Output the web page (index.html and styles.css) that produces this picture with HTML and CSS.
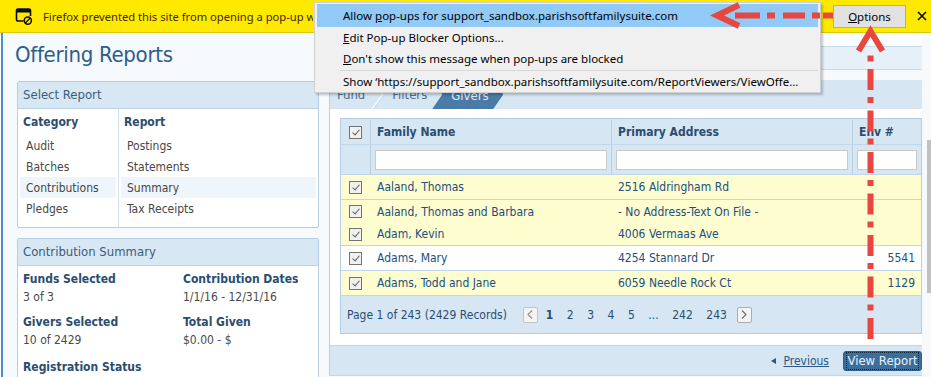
FILE: index.html
```html
<!DOCTYPE html>
<html>
<head>
	<meta charset="utf-8">
	<meta name="viewport" content="width=device-width">
	<title>Offering Reports</title>
	<link rel="stylesheet" href="styles.css">
</head>
<body>
	<div class="notify">
		<svg class="notify-icon" width="18" height="18" viewBox="0 0 18 18">
			<path d="M8.5 14H3a1.5 1.5 0 0 1-1.5-1.5V3.5A1.5 1.5 0 0 1 3 2h11a1.5 1.5 0 0 1 1.5 1.5V9" fill="none" stroke="#0c0c0d" stroke-width="1.6"/>
			<path d="M1.5 3.5A1.5 1.5 0 0 1 3 2h11a1.5 1.5 0 0 1 1.5 1.5V5.5H1.5z" fill="#0c0c0d"/>
			<circle cx="12.8" cy="13.6" r="3.6" fill="none" stroke="#0c0c0d" stroke-width="1.5"/>
			<path d="M10.3 16.1L15.3 11.1" stroke="#0c0c0d" stroke-width="1.4"/>
		</svg>
		<span class="notify-text">Firefox prevented this site from opening a pop-up window.</span>
		<button class="options" type="button"><u>O</u>ptions</button>
		<svg class="close" width="10" height="10" viewBox="0 0 10 10">
			<path d="M1 1L9 9M9 1L1 9" stroke="#0c0c0d" stroke-width="1.6"/>
		</svg>
	</div>

	<div class="page">
		<div class="left">
			<h1>Offering Reports</h1>

			<div class="panel">
				<div class="panel-head">Select Report</div>
				<div class="picker">
					<div class="pick-col cat">
						<div class="pick-head">Category</div>
						<div class="pick-item">Audit</div>
						<div class="pick-item">Batches</div>
						<div class="pick-item active">Contributions</div>
						<div class="pick-item">Pledges</div>
					</div>
					<div class="pick-col">
						<div class="pick-head">Report</div>
						<div class="pick-item">Postings</div>
						<div class="pick-item">Statements</div>
						<div class="pick-item active">Summary</div>
						<div class="pick-item">Tax Receipts</div>
					</div>
				</div>
			</div>

			<div class="panel summary">
				<div class="panel-head">Contribution Summary</div>
				<div class="summary-body">
					<div class="stat"><b>Funds Selected</b><span>3 of 3</span></div>
					<div class="stat"><b>Contribution Dates</b><span>1/1/16 - 12/31/16</span></div>
					<div class="stat"><b>Givers Selected</b><span>10 of 2429</span></div>
					<div class="stat"><b>Total Given</b><span>$0.00 - $</span></div>
					<div class="stat last"><b>Registration Status</b></div>
				</div>
			</div>
		</div>

		<div class="right">
			<div class="toolbar"></div>
			<div class="subbar"></div>
			<div class="wizard">
				<div class="crumbs">
					<span class="crumb">Fund</span>
					<svg class="crumb-sep" width="14" height="29" viewBox="0 0 14 29">
						<path d="M1 0L12 14.5L1 29" fill="none" stroke="#f5f9fc" stroke-width="1.6"/>
						<path d="M2.4 0L13.4 14.5L2.4 29" fill="none" stroke="#c3d5e5" stroke-width="0.8"/>
					</svg>
					<span class="crumb">Filters</span>
					<span class="crumb current">Givers</span>
				</div>

				<div class="wizard-body">
					<div class="grid">
						<div class="grid-row grid-head">
							<div class="cell cell-check"><span class="cb"></span></div>
							<div class="cell">Family Name</div>
							<div class="cell">Primary Address</div>
							<div class="cell">Env #</div>
						</div>
						<div class="grid-row grid-filter">
							<div class="cell"></div>
							<div class="cell"><input type="text"></div>
							<div class="cell"><input type="text"></div>
							<div class="cell"><input type="text"></div>
						</div>
						<div class="grid-row row">
							<div class="cell cell-check"><span class="cb"></span></div>
							<div class="cell">Aaland, Thomas</div>
							<div class="cell">2516 Aldringham Rd</div>
							<div class="cell num"></div>
						</div>
						<div class="grid-row row tight">
							<div class="cell cell-check"><span class="cb"></span></div>
							<div class="cell">Aaland, Thomas and Barbara</div>
							<div class="cell">- No Address-Text On File -</div>
							<div class="cell num"></div>
						</div>
						<div class="grid-row row short">
							<div class="cell cell-check"><span class="cb"></span></div>
							<div class="cell">Adam, Kevin</div>
							<div class="cell">4006 Vermaas Ave</div>
							<div class="cell num"></div>
						</div>
						<div class="grid-row row plain">
							<div class="cell cell-check"><span class="cb"></span></div>
							<div class="cell">Adams, Mary</div>
							<div class="cell">4254 Stannard Dr</div>
							<div class="cell num">5541</div>
						</div>
						<div class="grid-row row">
							<div class="cell cell-check"><span class="cb"></span></div>
							<div class="cell">Adams, Todd and Jane</div>
							<div class="cell">6059 Needle Rock Ct</div>
							<div class="cell num">1129</div>
						</div>
						<div class="pager">
							<span class="pg-info">Page 1 of 243 (2429 Records)</span>
							<span class="pg-btn prev-btn">
								<svg width="6" height="9" viewBox="0 0 6 9"><path d="M5 0.5L1 4.5L5 8.5" fill="none" stroke="#8c8c8c" stroke-width="1.1"/></svg>
							</span>
							<span class="pg-list">
								<b>1</b><span>2</span><span>3</span><span>4</span><span>5</span><span>...</span><span>242</span><span>243</span>
							</span>
							<span class="pg-btn next-btn">
								<svg width="6" height="9" viewBox="0 0 6 9"><path d="M1 0.5L5 4.5L1 8.5" fill="none" stroke="#6c6c6c" stroke-width="1.1"/></svg>
							</span>
						</div>
					</div>
				</div>

				<div class="wizard-foot">
					<a class="prev" href="#"><span class="tri"></span><span class="prev-text">Previous</span></a>
					<button class="view-btn" type="button"><span>View Report</span></button>
				</div>
			</div>
		</div>

		<div class="scrollbar"><div class="thumb"></div></div>
	</div>

	<div class="popup">
		<div class="popup-item hot">Allow <u>p</u>op-ups for support_sandbox.parishsoftfamilysuite.com</div>
		<div class="popup-item"><u>E</u>dit Pop-up Blocker Options...</div>
		<div class="popup-item"><u>D</u>on't show this message when pop-ups are blocked</div>
		<div class="popup-sep"></div>
		<div class="popup-item">Show ‘https://support_sandbox.parishsoftfamilysuite.com/ReportViewers/ViewOffe...</div>
	</div>

	<!-- red arrows drawn over the screenshot -->
	<svg class="annot" width="931" height="377" viewBox="0 0 931 377">
		<g fill="#e8463f">
			<rect x="735" y="12.5" width="25" height="6"/>
			<rect x="767" y="12.5" width="8" height="6"/>
			<rect x="783" y="12.5" width="22" height="6"/>
			<rect x="812" y="12.5" width="8" height="6"/>
			<rect x="823" y="12.5" width="10" height="6"/>
		</g>
		<polyline points="739,5 717,15.5 739,26" fill="none" stroke="#e8463f" stroke-width="6"/>
		<line x1="870.5" y1="55.5" x2="870.5" y2="340" stroke="#e8463f" stroke-width="6" stroke-dasharray="6 7.5 21 7"/>
		<polyline points="858.5,51 870.5,31 882.5,51" fill="none" stroke="#e8463f" stroke-width="6"/>
	</svg>
</body>
</html>
```

FILE: styles.css
```css
*{
	box-sizing: border-box;
}

body{
	margin: 0;
	width: 931px;
	height: 377px;
	overflow: hidden;
	position: relative;
	background: #fff;
	font: 12px/1.5 "DejaVu Sans Condensed", "DejaVu Sans", sans-serif;
	color: #333;
}

/* Firefox notification bar */
.notify{
	height: 33px;
	background: #ffe900;
	border-bottom: 1px solid #d8c900;
	display: flex;
	align-items: center;
	font: 11.5px "Noto Sans", sans-serif;
	color: #3e2800;
	white-space: nowrap;
	overflow: hidden;
}

.notify-icon{
	flex: none;
	margin-left: 15px;
}

/* the menu covers the rest of this line */
.notify-text{
	width: 270px;
	margin-left: 10px;
	margin-right: auto;
	overflow: hidden;
	font-size: 11.2px;
}

.options{
	flex: none;
	width: 73px;
	height: 23px;
	padding: 0;
	background: #e1e1e1;
	border: 1px solid #adadad;
	font: 11.5px "Noto Sans", sans-serif;
	color: #000;
}

.close{
	flex: none;
	margin: 0 4px 0 11px;
}

/* Popup menu */
.popup{
	position: absolute;
	left: 314px;
	top: 2px;
	width: 507px;
	padding: 1px 2px 0;
	background: #f0f0f0;
	border: 1px solid #cfcfcf;
	box-shadow: 2px 2px 2px rgba(0,0,0,.22);
	font: 11.5px "Noto Sans", sans-serif;
	color: #000;
}

.popup-item{
	height: 21.5px;
	line-height: 21.5px;
	padding-left: 26px;
	white-space: nowrap;
}

.popup-item.hot{
	height: 22.5px;
	line-height: 23.5px;
	background: #91c9f7;
}

.popup-sep{
	height: 1px;
	margin-left: 23px;
	background: #d7d7d7;
}

/* Page */
.page{
	display: flex;
	height: 344px;
	margin-left: 1px;
	padding-left: 14px;
	border-left: 2px solid #4a8fd4;
	background: #f7fafd;
}

.left{
	width: 302px;
	flex: none;
}

.left h1{
	margin: 8px 0 12px -2px;
	font-size: 22px;
	line-height: 28px;
	font-weight: normal;
	letter-spacing: -0.3px;
	color: #2d5d8c;
}

.panel{
	background: #fff;
	border: 1px solid #b8cde1;
	border-radius: 2px;
}

.panel.summary{
	margin-top: 10px;
}

.panel-head{
	height: 27px;
	line-height: 26px;
	padding-left: 5px;
	background: #d7e7f4;
	border-bottom: 1px solid #bcd0e3;
	font-size: 13px;
	color: #3d5c7b;
}

.picker{
	display: flex;
}

.pick-col{
	flex: 1;
	padding: 3px 2px 8px;
}

.pick-col.cat{
	flex: none;
	width: 101px;
	border-right: 1px solid #d3e0ec;
}

.pick-head{
	height: 20px;
	line-height: 20px;
	margin-bottom: 3px;
	padding-left: 3px;
	font-weight: bold;
	color: #2a4d70;
}

.pick-item{
	height: 21px;
	line-height: 23px;
	padding-left: 6px;
	color: #474747;
}

.pick-item.active{
	background: #eef5fb;
}

.summary-body{
	display: grid;
	grid-template-columns: 160px 1fr;
	padding: 4px 5px 0;
}

.stat{
	margin-bottom: 7px;
	line-height: 18px;
}

.stat.last{
	margin-top: 2px;
}

.stat b{
	display: block;
	color: #2a4d70;
}

.stat span{
	color: #4a4a4a;
}

/* Right side */
.right{
	width: 593px;
	flex: none;
	margin-left: 10px;
}

.toolbar{
	height: 14px;
	background: #fbfdfe;
	border-bottom: 1px solid #c8d9e8;
}

.subbar{
	height: 23px;
	margin-bottom: 10px;
	background: #e6f0f9;
	border-bottom: 1px solid #c8d9e8;
}

.wizard{
	background: #fff;
	border-left: 1px solid #b8cde1;
	border-bottom: 1px solid #c3d6e8;
}

.crumbs{
	height: 29px;
	display: flex;
	align-items: center;
	background: #d6e6f3;
	font-size: 13px;
	color: #4a6d90;
}

.crumb{
	padding-left: 7px;
	padding-top: 1px;
}

.crumb-sep{
	margin-left: 6px;
}

.crumb.current{
	height: 29px;
	line-height: 29px;
	width: 71px;
	margin-left: 5px;
	padding-left: 19px;
	background: #4a7aa6;
	color: #e3ecf5;
	clip-path: polygon(0 0, 61px 0, 100% 50%, 61px 100%, 0 100%, 10px 50%);
}

.wizard-body{
	padding: 9px 0 11px 10px;
}

/* Givers grid */
.grid{
	width: 582px;
	border: 1px solid #b5cce1;
	color: #214f7e;
}

.grid-row{
	display: grid;
	grid-template-columns: 29px 241px 241px 69px;
	border-bottom: 1px solid #c2d6e9;
}

.cell{
	display: flex;
	align-items: center;
	padding-left: 7px;
	white-space: nowrap;
}

.cell-check{
	justify-content: center;
	padding: 0;
}

.grid-head{
	height: 26px;
	padding-top: 1px;
	background: #d6e6f3;
	font-weight: bold;
	color: #2a4d70;
}

.grid-filter{
	height: 30px;
	background: #d6e6f3;
}

.grid-head .cell + .cell,
.grid-filter .cell + .cell{
	border-left: 1px solid #b9cfe3;
	padding-left: 6px;
}

.grid-filter .cell + .cell{
	padding: 0 4px 0 4px;
}

.grid-filter input{
	width: 100%;
	height: 20px;
	margin: 0;
	padding: 0;
	border: 1px solid #c9c9c9;
	background: #fff;
}

.row{
	height: 25px;
	background: #fefdd0;
}

.row.tight{
	height: 23px;
	border-bottom: 0;
}

.row.short{
	height: 23px;
}

.row.plain{
	background: #fff;
}

.cell.num{
	justify-content: flex-end;
	padding: 0 6px 0 0;
}

.cb{
	position: relative;
	width: 13px;
	height: 13px;
	border: 1px solid #737373;
	background: #f1f1f1;
}

.cb::after{
	content: "";
	position: absolute;
	left: 3.5px;
	top: 1px;
	width: 3px;
	height: 6px;
	border: solid #5e5e5e;
	border-width: 0 1.5px 1.5px 0;
	transform: rotate(40deg);
}

.pager{
	height: 37px;
	display: flex;
	align-items: center;
	padding-left: 6px;
	background: #d6e6f3;
	color: #2a4d70;
}

.pg-btn{
	width: 15px;
	height: 16px;
	display: flex;
	align-items: center;
	justify-content: center;
	border: 1px solid #adadad;
	border-radius: 2px;
	background: #f4f4f4;
}

.prev-btn{
	margin-left: 16px;
	border-color: #c4c4c4;
}

.pg-list{
	display: flex;
	gap: 13.5px;
	margin-left: 8px;
}

.next-btn{
	margin-left: 10px;
}

/* Footer */
.wizard-foot{
	height: 30px;
	display: flex;
	align-items: center;
	justify-content: flex-end;
	background: #d6e6f3;
	border-top: 1px solid #c3d6e8;
}

.prev{
	display: flex;
	align-items: center;
	margin-right: 14px;
	color: #2c5786;
}

.tri{
	width: 0;
	height: 0;
	margin-right: 7px;
	border-top: 3.5px solid transparent;
	border-bottom: 3.5px solid transparent;
	border-right: 5px solid #2c5786;
}

.view-btn{
	width: 79px;
	height: 20px;
	padding: 1px 3px;
	background: #3c6e9b;
	border: 1px solid #2f5f8b;
	border-radius: 3px;
	font: 13px "DejaVu Sans Condensed", "DejaVu Sans", sans-serif;
	color: #eaf1f8;
}

.view-btn span{
	display: block;
	height: 16px;
	line-height: 15px;
	outline: 1px dotted #0e2236;
}

.scrollbar{
	width: 4px;
	flex: none;
	margin-left: 5px;
}

.scrollbar .thumb{
	height: 153px;
	margin-top: 107px;
	background: #c1c1c1;
}

.annot{
	position: absolute;
	left: 0;
	top: 0;
	pointer-events: none;
}
```
